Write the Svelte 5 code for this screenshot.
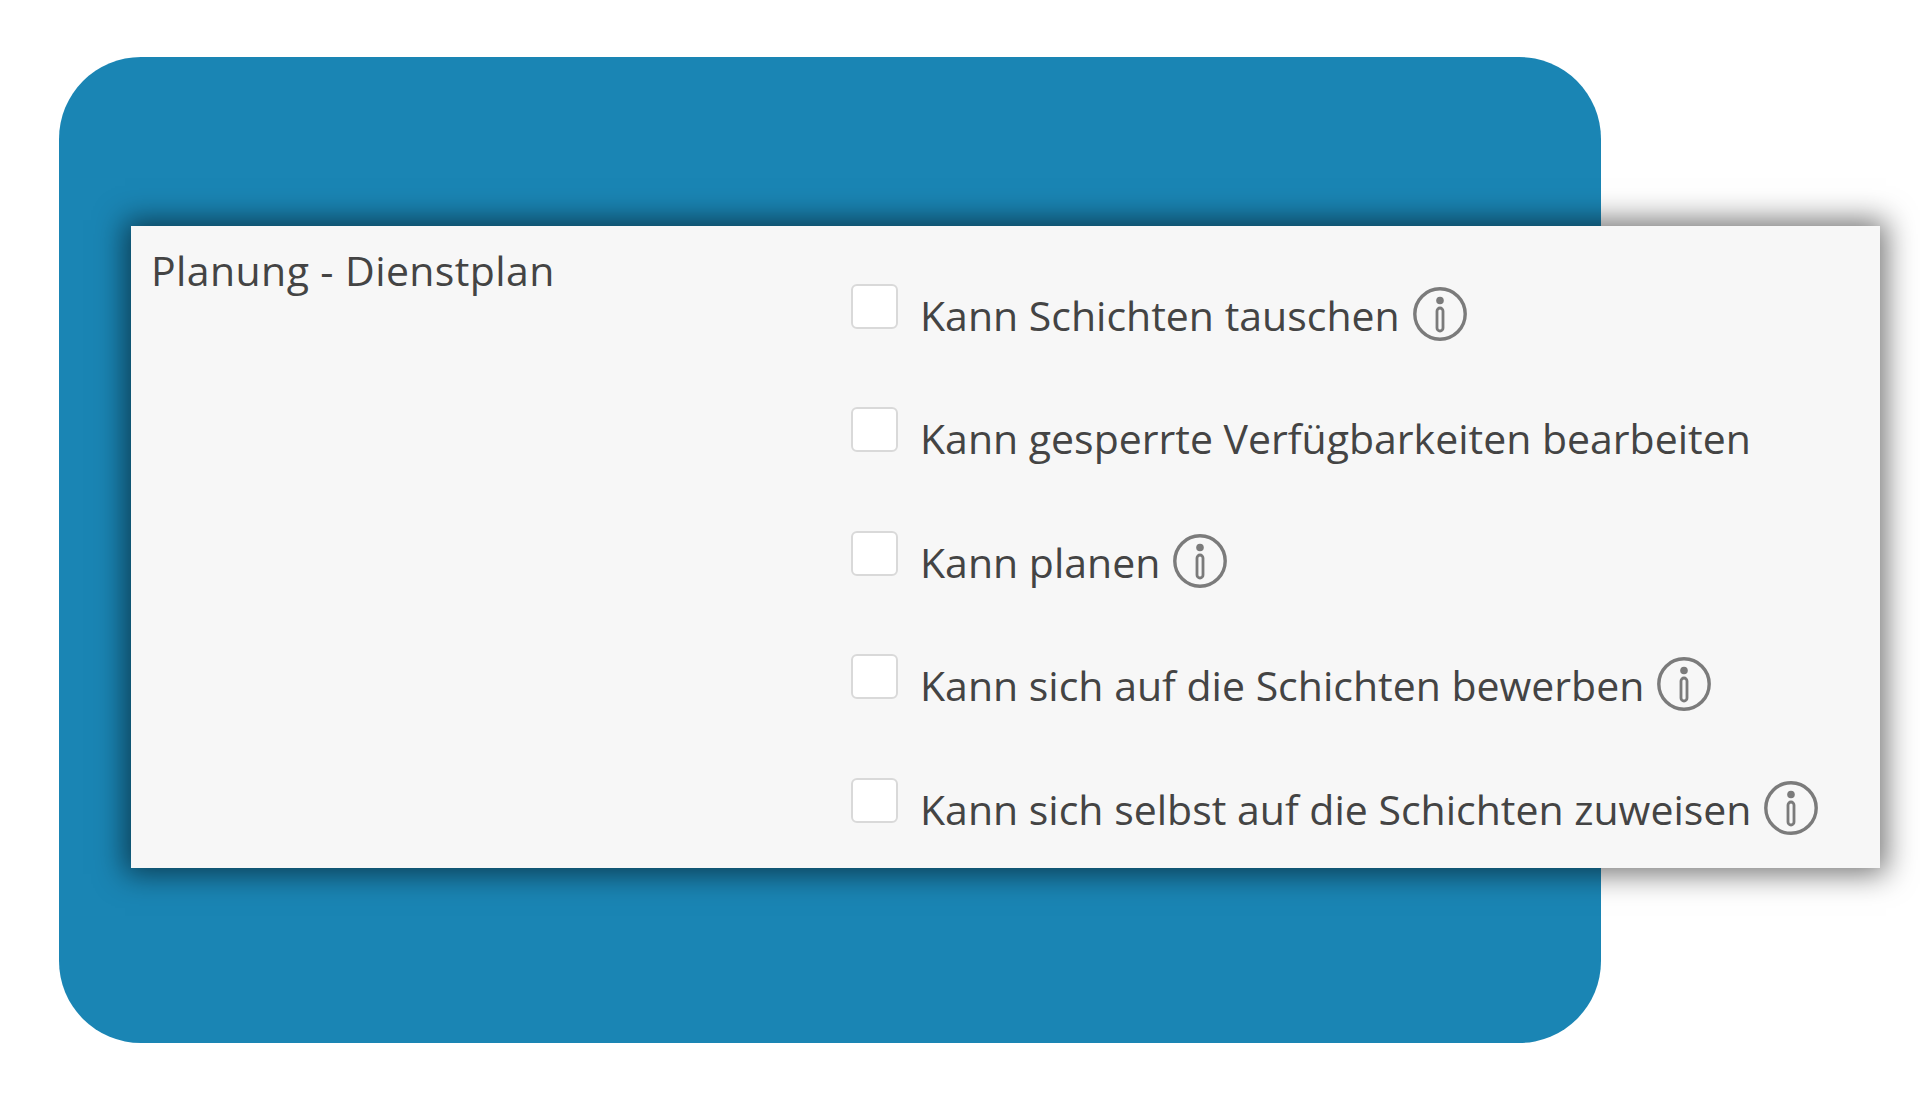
<script>
  const permissions = [
    { label: 'Kann Schichten tauschen', info: true },
    { label: 'Kann gesperrte Verfügbarkeiten bearbeiten', info: false },
    { label: 'Kann planen', info: true },
    { label: 'Kann sich auf die Schichten bewerben', info: true },
    { label: 'Kann sich selbst auf die Schichten zuweisen', info: true },
  ];
</script>

<div class="stage">
  <section class="backdrop">
    <div class="panel">
      <h2 class="title">Planung - Dienstplan</h2>
      <ul class="list">
        {#each permissions as item (item.label)}
          <li class="row">
            <span class="checkbox"></span>
            <span class="label">{item.label}</span>
            {#if item.info}
              <svg class="info" viewBox="0 0 54 54" aria-hidden="true">
                <circle cx="27" cy="27" r="25.2" fill="none" stroke="#7b7b7b" stroke-width="3.4" />
                <circle cx="27" cy="13.5" r="3.8" fill="#7b7b7b" />
                <rect x="24" y="21" width="6" height="23" rx="3" fill="none" stroke="#7b7b7b" stroke-width="2.8" />
              </svg>
            {/if}
          </li>
        {/each}
      </ul>
    </div>
  </section>
</div>

<style>
  :global(body) {
    margin: 0;
    background: #fff;
  }

  .stage {
    width: 1920px;
    height: 1100px;
    padding: 57px 0 0 59px;
    box-sizing: border-box;
    overflow: hidden;
  }

  .backdrop {
    width: 1542px;
    height: 986px;
    padding: 169px 0 0 72px;
    box-sizing: border-box;
    border-radius: 82px;
    background: #1a85b4;
  }

  .panel {
    display: grid;
    grid-template-columns: 720px 1fr;
    width: 1749px;
    height: 642px;
    background: #f7f7f7;
    box-shadow: 0 0 28px 6px rgba(0, 0, 0, 0.55);
    color: #444;
    font-family: "Open Sans", "Noto Sans", sans-serif;
  }

  .title {
    margin: 0;
    padding: 18px 0 0 20px;
    font-size: 41px;
    font-weight: 400;
    letter-spacing: 0.4px;
    line-height: 53px;
  }

  .list {
    display: flex;
    flex-direction: column;
    gap: 70.4px;
    margin: 0;
    padding: 58px 0 0;
    list-style: none;
  }

  .row {
    display: flex;
    align-items: flex-start;
    height: 53px;
  }

  .checkbox {
    flex: none;
    width: 43px;
    height: 41px;
    margin-right: 22px;
    border: 2px solid #d9d9d9;
    border-radius: 6px;
    background: #fff;
  }

  .label {
    padding-top: 5px;
    font-size: 41px;
    line-height: 53px;
    white-space: nowrap;
  }

  .info {
    flex: none;
    width: 54px;
    height: 54px;
    margin: 3px 0 0 13px;
  }
</style>
